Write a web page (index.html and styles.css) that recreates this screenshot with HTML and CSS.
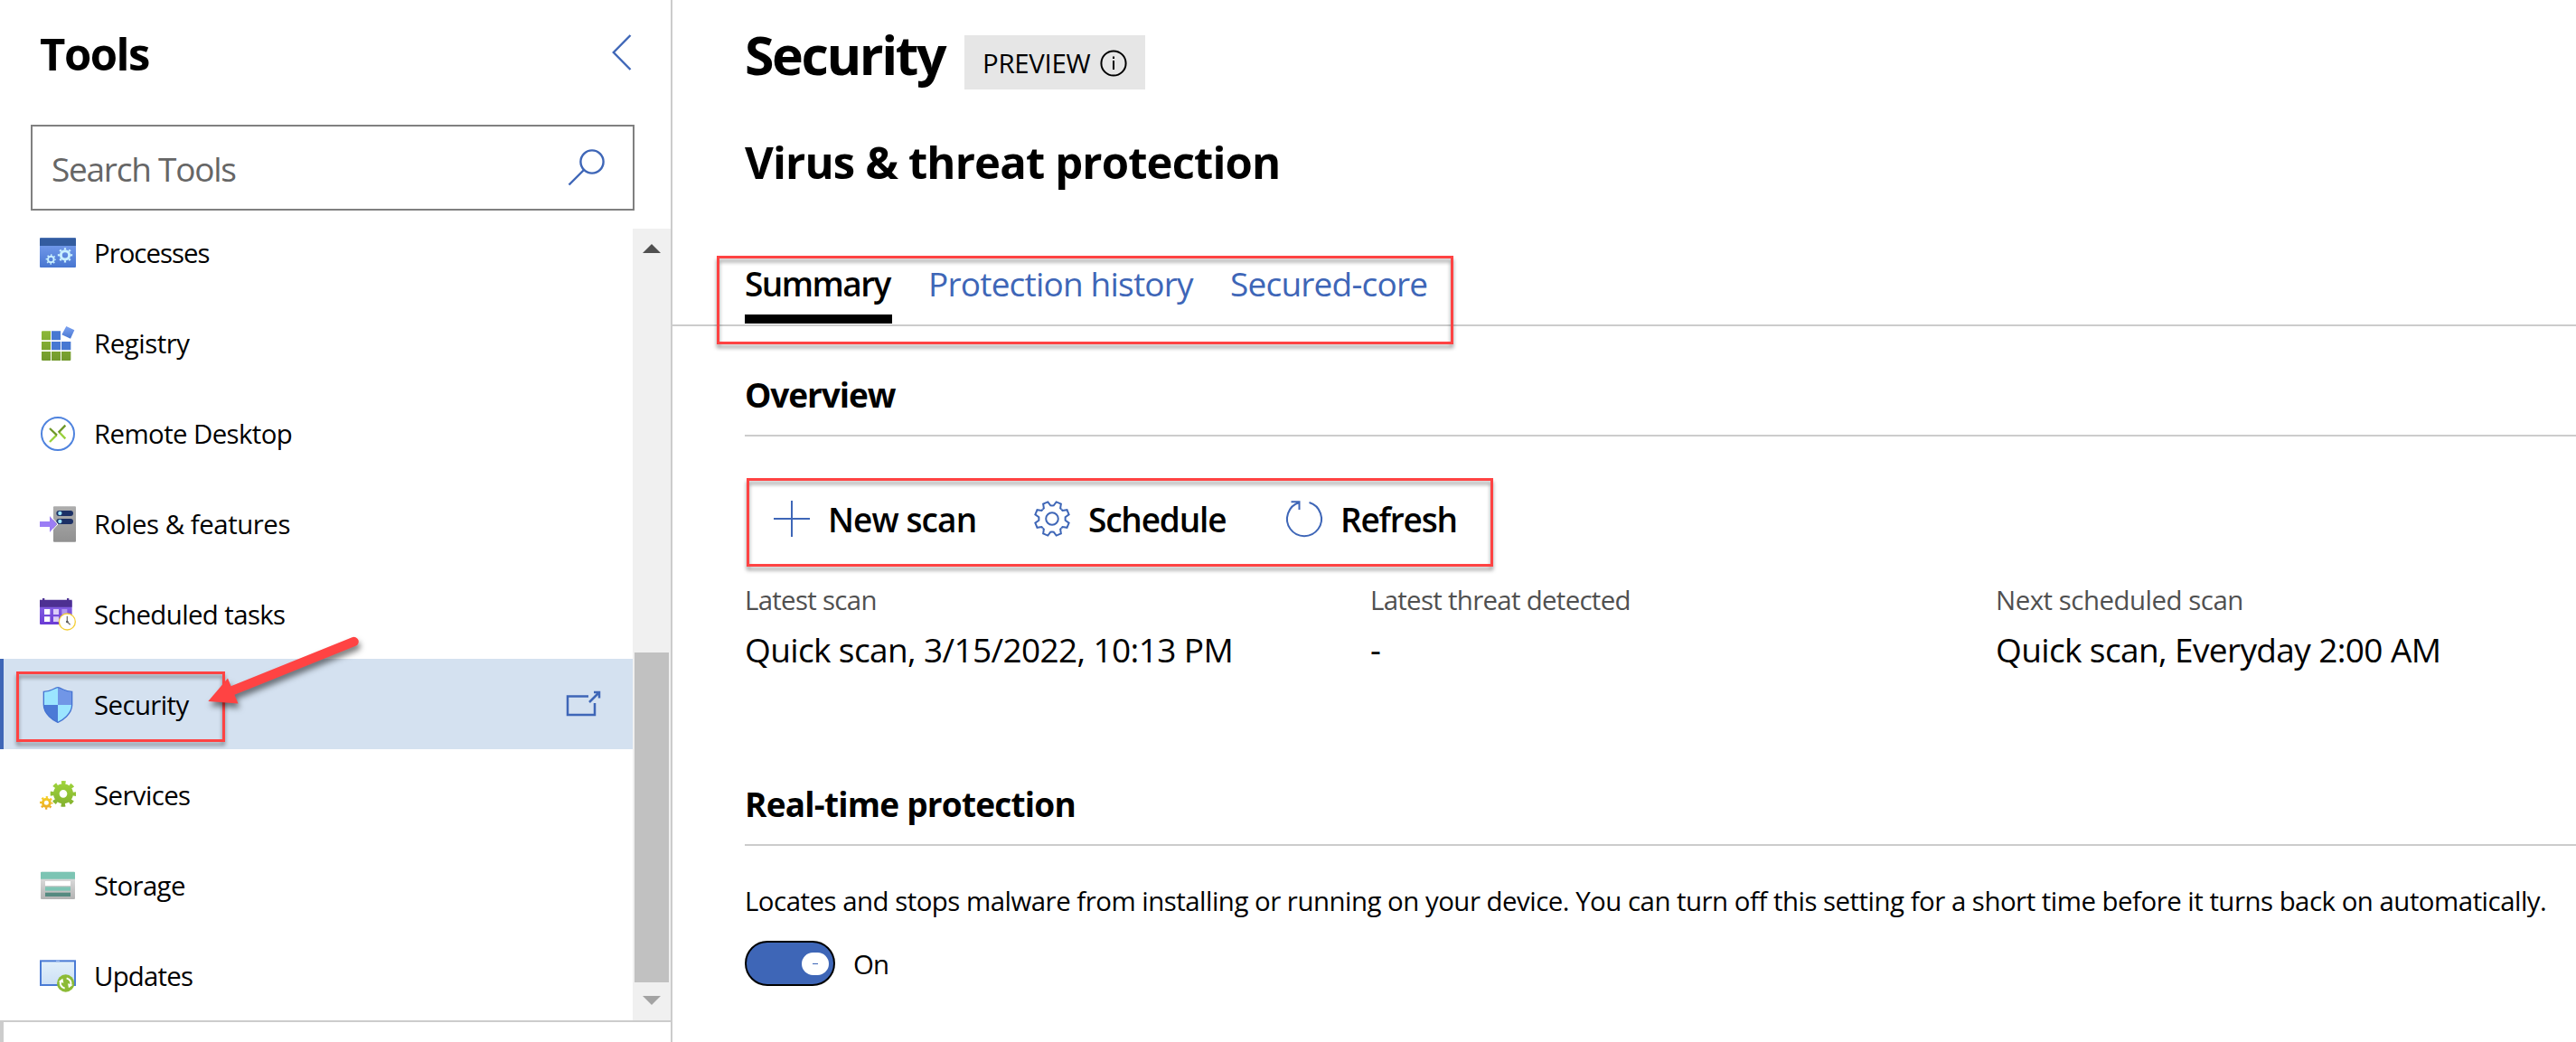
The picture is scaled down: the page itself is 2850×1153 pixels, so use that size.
FILE: index.html
```html
<!DOCTYPE html>
<html lang="en">
<head>
<meta charset="utf-8">
<title>Security</title>
<link rel="stylesheet" href="styles.css">
</head>
<body>
<svg class="defs" width="0" height="0" aria-hidden="true">
  <defs>
    <linearGradient id="blue" x1="0" y1="0" x2="0" y2="1"><stop offset="0" stop-color="#7da3f2"/><stop offset="1" stop-color="#4876d0"/></linearGradient>
    <linearGradient id="sky" x1="0" y1="0" x2="0" y2="1"><stop offset="0" stop-color="#e2f0fa"/><stop offset="1" stop-color="#cce0f6"/></linearGradient>
    <linearGradient id="grey" x1="0" y1="0" x2="0" y2="1"><stop offset="0" stop-color="#adadad"/><stop offset="1" stop-color="#919191"/></linearGradient>
    <linearGradient id="silver" x1="0" y1="0" x2="0" y2="1"><stop offset="0" stop-color="#e6e6e6"/><stop offset="1" stop-color="#b3b3b3"/></linearGradient>
    <linearGradient id="violet" x1="0" y1="0" x2="0" y2="1"><stop offset="0" stop-color="#8d6ae8"/><stop offset="1" stop-color="#6a3bd4"/></linearGradient>
    <linearGradient id="leaf" gradientUnits="userSpaceOnUse" x1="0" y1="19" x2="0" y2="117"><stop offset="0" stop-color="#8cb838"/><stop offset="1" stop-color="#72992d"/></linearGradient>
    <linearGradient id="lime" gradientUnits="userSpaceOnUse" x1="0" y1="12" x2="0" y2="98"><stop offset="0" stop-color="#a0d53c"/><stop offset="1" stop-color="#82b02e"/></linearGradient>
    <linearGradient id="gold" gradientUnits="userSpaceOnUse" x1="0" y1="63" x2="0" y2="107"><stop offset="0" stop-color="#f5d228"/><stop offset="1" stop-color="#e9a624"/></linearGradient>
    <path id="tooth" d="M-5.6-13.5L-4-14.2L-2.8-19H2.8L4-14.2L5.6-13.5"/>
  </defs>
</svg>
<div class="app">
  <aside class="sidebar">
    <header class="sidebar-head">
      <h2 class="sidebar-title">Tools</h2>
      <svg class="collapse" viewBox="0 0 22 40"><path d="M20.5 1L1.8 20L20.5 39"/></svg>
    </header>
    <div class="search">
      <span class="search-hint">Search Tools</span>
      <svg class="search-icon" viewBox="0 0 42 42"><circle cx="27" cy="14" r="12.6"/><path d="M18 23L1.5 39.5"/></svg>
    </div>
    <div class="tool-area">
      <ul class="tools">
        <li class="tool tool-wide">
          <svg class="tool-icon" viewBox="0 0 120 120"><rect y="10" width="120" height="98" rx="3" fill="url(#blue)"/><path d="M0 36V13q0-3 3-3H117q3 0 3 3V36z" fill="#335c9f"/>
            <g fill="none" stroke="#c9f0ff"><circle cx="84" cy="67" r="14" stroke-width="9"/><circle cx="84" cy="67" r="21" stroke-width="7" pathLength="16" stroke-dasharray=".8 1.2" stroke-dashoffset=".4"/><circle cx="37" cy="81" r="10" stroke-width="6"/><circle cx="37" cy="81" r="14.5" stroke-width="5" pathLength="16" stroke-dasharray=".8 1.2" stroke-dashoffset=".4"/></g></svg>
          <span>Processes</span></li>
        <li class="tool tool-snug">
          <svg class="tool-icon" viewBox="0 0 120 120"><path fill="url(#leaf)" d="M9 19H36V49H6V22q0-3 3-3zM6 54H36V82H6zM6 87H36V117H9q-3 0-3-3zM39 87H69V117H39zM72 87H103V114q0 3-3 3H72z"/><path fill="#4778d2" d="M39 19H69V49H39zM39 54H69V82H39zM72 54H103V82H72z"/><path fill="url(#blue)" d="M88 3L115 16L102 44L73 31z"/></svg>
          <span>Registry</span></li>
        <li class="tool">
          <svg class="tool-icon" viewBox="0 0 120 120" fill="none"><circle cx="60" cy="60" r="54" stroke="#4f83de" stroke-width="6"/><g stroke-width="7"><path stroke="#9ad13c" d="M56 64L33 87M64 54L85 76"/><path stroke="#6f982b" d="M33 42L57 65M85 32L62 56"/></g></svg>
          <span>Remote Desktop</span></li>
        <li class="tool tool-snug">
          <svg class="tool-icon" viewBox="0 0 120 120"><rect x="45" y="1" width="75" height="118" rx="3" fill="url(#grey)"/><g fill="#1c3065"><rect x="55" y="15" width="56" height="18" rx="9"/><rect x="55" y="42" width="56" height="18" rx="9"/></g><g fill="#9be5ff"><circle cx="67" cy="24" r="6.5"/><circle cx="67" cy="51" r="6.5"/></g><path d="M0 51H33V33L57 60L33 87V69H0z" fill="#9b7df5"/><path d="M33 30L60 60L33 90" fill="none" stroke="#fff" stroke-width="3"/></svg>
          <span>Roles &amp; features</span></li>
        <li class="tool">
          <svg class="tool-icon" viewBox="0 0 120 120"><rect y="14" width="107" height="79" rx="3" fill="url(#violet)"/><path d="M0 35V11H9V6H16V11H90V6H97V11H107V35z" fill="#4d3092"/><path fill="#fff" d="M15 42H34V60H15zM15 67H34V84H15z"/><path fill="#dccdf8" d="M45 42H63V60H45zM45 67H63V84H45z"/><path fill="#b299ee" d="M73 42H91V60H73z"/><circle cx="91" cy="84" r="27" fill="#fff" stroke="#f4cf38" stroke-width="4"/><path d="M91 65V84L101 94" fill="none" stroke="#777" stroke-width="4"/><circle cx="91" cy="84" r="4" fill="#555"/></svg>
          <span>Scheduled tasks</span></li>
        <li class="tool tool-active">
          <svg class="tool-icon" viewBox="0 0 120 120"><path fill="#9be5ff" d="M60 2C48 2 42 16 13 16V60H60zM60 60H107C107 90 74 112 60 118z"/><path fill="#7196e6" d="M60 2C72 2 78 16 107 16V60H60z"/><path fill="#4b7ad6" d="M13 60H60V118C46 112 13 90 13 60z"/><path fill="none" stroke="#4473d2" stroke-width="4" d="M60 2C47 2 43 16 13 16V60C13 90 46 112 60 118C74 112 107 90 107 60V16C77 16 73 2 60 2z"/></svg>
          <span>Security</span>
          <svg class="popout" viewBox="0 0 40 30" fill="none"><path d="M25 6.5H2V27H32V14"/><path d="M26 13L36.5 2.5M31 2H37V8.5"/></svg></li>
        <li class="tool">
          <svg class="tool-icon" viewBox="0 0 120 120" fill="none"><g stroke="url(#lime)"><circle cx="78" cy="55" r="23" stroke-width="20"/><circle cx="78" cy="55" r="37" stroke-width="12" pathLength="16" stroke-dasharray=".95 1.05" stroke-dashoffset=".475"/></g><g stroke="url(#gold)"><circle cx="22" cy="85" r="12" stroke-width="9"/><circle cx="22" cy="85" r="18.5" stroke-width="7" pathLength="16" stroke-dasharray=".95 1.05" stroke-dashoffset=".475"/></g></svg>
          <span>Services</span></li>
        <li class="tool">
          <svg class="tool-icon" viewBox="0 0 120 120"><rect x="3" y="14" width="114" height="91" rx="3" fill="url(#silver)"/><path d="M3 38V17q0-3 3-3H114q3 0 3 3V38z" fill="#7cc4b3"/><path fill="#fff" d="M18 45H102V60H18z"/><path fill="#7cc4b3" d="M18 64H102V77H18z"/><path fill="#558a80" d="M18 83H102V96H18z"/></svg>
          <span>Storage</span></li>
        <li class="tool tool-tight">
          <svg class="tool-icon" viewBox="0 0 120 120"><rect x="3" y="10" width="114" height="80" fill="url(#sky)" stroke="#4a7bd5" stroke-width="6"/><path d="M54 10H66" stroke="#8fb0ea" stroke-width="5"/><circle cx="86" cy="84" r="29" fill="#8cbb36"/><g fill="none" stroke="#fff" stroke-width="6"><path d="M83 101C70 97 65 86 71 76M89 67C102 71 107 82 101 92"/></g><path fill="#fff" d="M62 79L76 68L79 83zM110 89L96 100L93 85z"/></svg>
          <span>Updates</span></li>
      </ul>
      <div class="scrollbar">
        <svg class="scroll-up" viewBox="0 0 20 10"><path d="M0 10L10 0L20 10z"/></svg>
        <div class="scroll-thumb"></div>
        <svg class="scroll-down" viewBox="0 0 20 10"><path d="M0 0L10 10L20 0z"/></svg>
      </div>
    </div>
    <div class="sidebar-foot"></div>
  </aside>

  <main class="main">
    <div class="title-row">
      <h1 class="title">Security</h1>
      <div class="badge"><span>PREVIEW</span>
        <svg class="info" viewBox="0 0 30 30"><circle cx="15" cy="15" r="13.6"/><path d="M15 12V22M15 7.5V10"/></svg></div>
    </div>
    <h2 class="subtitle">Virus &amp; threat protection</h2>
    <nav class="tabs">
      <span class="tab tab-current">Summary</span>
      <span class="tab tab-history">Protection history</span>
      <span class="tab">Secured-core</span>
    </nav>
    <section class="section overview">
      <h3 class="section-title">Overview</h3>
      <div class="commands">
        <div class="command command-new"><svg class="command-icon" viewBox="0 0 40 40"><path d="M20 0V40M0 20H40"/></svg><span>New scan</span></div>
        <div class="command"><svg class="command-icon" viewBox="0 0 40 40"><g transform="translate(20 20)"><use href="#tooth" transform="rotate(22.5)"/><use href="#tooth" transform="rotate(67.5)"/><use href="#tooth" transform="rotate(112.5)"/><use href="#tooth" transform="rotate(157.5)"/><use href="#tooth" transform="rotate(202.5)"/><use href="#tooth" transform="rotate(247.5)"/><use href="#tooth" transform="rotate(292.5)"/><use href="#tooth" transform="rotate(337.5)"/><circle r="6.8"/></g></svg><span>Schedule</span></div>
        <div class="command"><svg class="command-icon" viewBox="0 0 40 40"><path d="M14.5 2A19 19 0 1 0 25.5 2M5.5 1.2H14.5V10"/></svg><span>Refresh</span></div>
      </div>
      <dl class="facts">
        <div class="fact"><dt>Latest scan</dt><dd>Quick scan, 3/15/2022, 10:13 PM</dd></div>
        <div class="fact"><dt>Latest threat detected</dt><dd>-</dd></div>
        <div class="fact fact-next"><dt>Next scheduled scan</dt><dd>Quick scan, Everyday 2:00 AM</dd></div>
      </dl>
    </section>
    <section class="section realtime">
      <h3 class="section-title">Real-time protection</h3>
      <p class="note">Locates and stops malware from installing or running on your device. You can turn off this setting for a short time before it turns back on automatically.</p>
      <div class="switch-row">
        <div class="switch"><div class="knob"><i class="knob-mark"></i></div></div>
        <span class="switch-label">On</span>
      </div>
    </section>
  </main>

  <div class="callout callout-tool"></div>
  <div class="callout callout-tabs"></div>
  <div class="callout callout-commands"></div>
  <svg class="pointer" viewBox="220 695 190 100"><path d="M391.5 710L255 765" stroke="#ff4343" stroke-width="10.5" stroke-linecap="round"/><path d="M230.3 776L252 750.5L263.5 778.5z" fill="#ff4343"/></svg>
</div>
</body>
</html>
```
FILE: styles.css
```css
* { box-sizing: border-box; margin: 0; padding: 0; }

body {
  background: #fff;
  color: #000;
  font-family: "Open Sans", "Noto Sans", sans-serif;
  font-size: 29.4px;
  line-height: 40px;
  overflow: hidden;
}

.defs { position: absolute; }

.app {
  position: relative;
  display: flex;
  width: 2850px;
  height: 1153px;
  overflow: hidden;
  white-space: nowrap;
}

/* Sidebar */
.sidebar {
  display: flex;
  flex-direction: column;
  flex: none;
  width: 744px;
  border-right: 2px solid #ccc;
}

.sidebar-head {
  display: flex;
  justify-content: space-between;
  height: 138px;
  padding: 29px 43px 0 44px;
}

.sidebar-title {
  font-size: 49px;
  font-weight: 700;
  line-height: 60px;
  letter-spacing: -1.5px;
}

.collapse {
  width: 22px;
  height: 40px;
  margin-top: 9px;
  fill: none;
  stroke: #3e66b7;
  stroke-width: 2.4;
}

.search {
  display: flex;
  align-items: center;
  justify-content: space-between;
  flex: none;
  width: 668px;
  height: 95px;
  margin-left: 34px;
  padding: 0 30px 0 21px;
  border: 2px solid #808080;
}

.search-hint {
  padding-top: 3px;
  color: #666;
  font-size: 37px;
  letter-spacing: -1.25px;
}

.search-icon {
  width: 42px;
  height: 42px;
  fill: none;
  stroke: #3e66b7;
  stroke-width: 2.4;
}

.tool-area {
  display: flex;
  flex: none;
  height: 876px;
  margin-top: 20px;
  overflow: hidden;
}

.tools {
  width: 700px;
  margin-top: -24px;
  list-style: none;
}

.tool {
  display: flex;
  align-items: center;
  gap: 20px;
  height: 100px;
  padding: 1px 35px 0 44px;
  letter-spacing: -.6px;
}

.tool-snug { letter-spacing: -.45px; }
.tool-tight { letter-spacing: -.8px; }
.tool-wide { letter-spacing: -1px; }

.tool-active {
  padding-left: 40px;
  border-left: 4px solid #3e66b7;
  background: #d4e1f0;
}

.tool-icon {
  flex: none;
  width: 40px;
  height: 40px;
  margin-top: 1px;
}

.popout {
  width: 40px;
  height: 30px;
  margin: -2px -1px 0 auto;
  stroke: #3e66b7;
  stroke-width: 2.5;
}

.scrollbar {
  display: flex;
  flex-direction: column;
  align-items: center;
  width: 42px;
  padding-top: 17px;
  background: #f0f0f0;
}

.scroll-up { width: 20px; height: 10px; fill: #505050; }
.scroll-thumb { width: 38px; height: 365px; margin: 442px 0 15px; background: #c1c1c1; }
.scroll-down { width: 20px; height: 10px; fill: #a3a3a3; }

.sidebar-foot {
  flex: 1;
  border-top: 2px solid #ccc;
  border-left: 4px solid #ccc;
}

/* Main pane */
.main {
  flex: 1;
  min-width: 0;
  padding-top: 20px;
}

.title-row {
  display: flex;
  height: 80px;
  padding-left: 80px;
}

.title {
  width: 243px;
  font-size: 59px;
  font-weight: 700;
  line-height: 80px;
  letter-spacing: -2.4px;
}

.badge {
  display: flex;
  align-items: center;
  justify-content: space-between;
  width: 200px;
  height: 60px;
  margin-top: 19px;
  padding: 1px 20px 0;
  background: #e6e6e6;
  letter-spacing: -.3px;
}

.info {
  width: 30px;
  height: 30px;
  margin-top: 1px;
  fill: none;
  stroke: #000;
  stroke-width: 2;
}

.subtitle {
  margin: 49px 0 0 80px;
  font-size: 49px;
  font-weight: 700;
  line-height: 60px;
  letter-spacing: -.86px;
}

.tabs {
  display: flex;
  gap: 40px;
  height: 73px;
  margin-top: 79px;
  padding-left: 80px;
  border-bottom: 2px solid #ccc;
}

.tab {
  height: 70px;
  color: #3e66b7;
  font-size: 37px;
  line-height: 52px;
  letter-spacing: -.8px;
}

.tab-current {
  width: 163px;
  border-bottom: 10px solid #000;
  color: #000;
  font-weight: 600;
  letter-spacing: -1.55px;
}

.tab-history { width: 294px; }

.section { padding-left: 80px; }
.overview { padding-top: 50px; }
.realtime { padding-top: 119px; }

.section-title {
  height: 72px;
  border-bottom: 2px solid #ccc;
  font-size: 37px;
  font-weight: 700;
  line-height: 52px;
  letter-spacing: -.78px;
}

.overview .section-title { letter-spacing: -1.1px; }

.commands {
  display: grid;
  grid-template-columns: 288px 279px auto;
  height: 40px;
  margin-top: 70px;
  padding-left: 32px;
}

.command {
  display: flex;
  align-items: center;
  gap: 20px;
  font-size: 37px;
  font-weight: 600;
  letter-spacing: -1.18px;
}

.command span { padding-top: 2px; }

.command-new { letter-spacing: -.9px; }

.command-icon {
  width: 40px;
  height: 40px;
  fill: none;
  stroke: #3e66b7;
  stroke-width: 2;
  overflow: visible;
}

.facts {
  display: grid;
  grid-template-columns: 692px 692px auto;
  margin-top: 50px;
}

.fact dt {
  color: #505050;
  line-height: 42px;
  letter-spacing: -.68px;
}

.fact dd {
  margin-top: 8px;
  font-size: 37px;
  line-height: 52px;
  letter-spacing: -.62px;
}

.fact-next dt { letter-spacing: -.47px; }
.fact-next dd { letter-spacing: -.62px; }

.note {
  margin-top: 41px;
  letter-spacing: -.49px;
}

.switch-row {
  display: flex;
  align-items: center;
  gap: 20px;
  margin-top: 24px;
}

.switch {
  display: flex;
  align-items: center;
  justify-content: flex-end;
  width: 100px;
  height: 50px;
  padding-right: 5px;
  border: 2px solid #000;
  border-radius: 25px;
  background: #3e66b7;
}

.switch-label {
  padding-top: 2px;
  letter-spacing: -.8px;
}

.knob {
  display: flex;
  align-items: center;
  justify-content: center;
  width: 30px;
  height: 25px;
  border-radius: 12.5px;
  background: #fff;
}

.knob-mark { width: 6px; height: 1px; background: #3e66b7; }

/* Annotations drawn over the page */
.callout {
  position: absolute;
  border: 3px solid #ff4343;
  filter: drop-shadow(0 4px 2px rgba(0, 0, 0, .4));
}

.callout-tool { left: 18px; top: 743px; width: 231px; height: 78px; }
.callout-tabs { left: 793px; top: 283px; width: 815px; height: 98px; }
.callout-commands { left: 826px; top: 529px; width: 826px; height: 98px; }

.pointer {
  position: absolute;
  left: 220px;
  top: 695px;
  width: 190px;
  height: 100px;
  filter: drop-shadow(2px 5px 3px rgba(0, 0, 0, .5));
}
```
